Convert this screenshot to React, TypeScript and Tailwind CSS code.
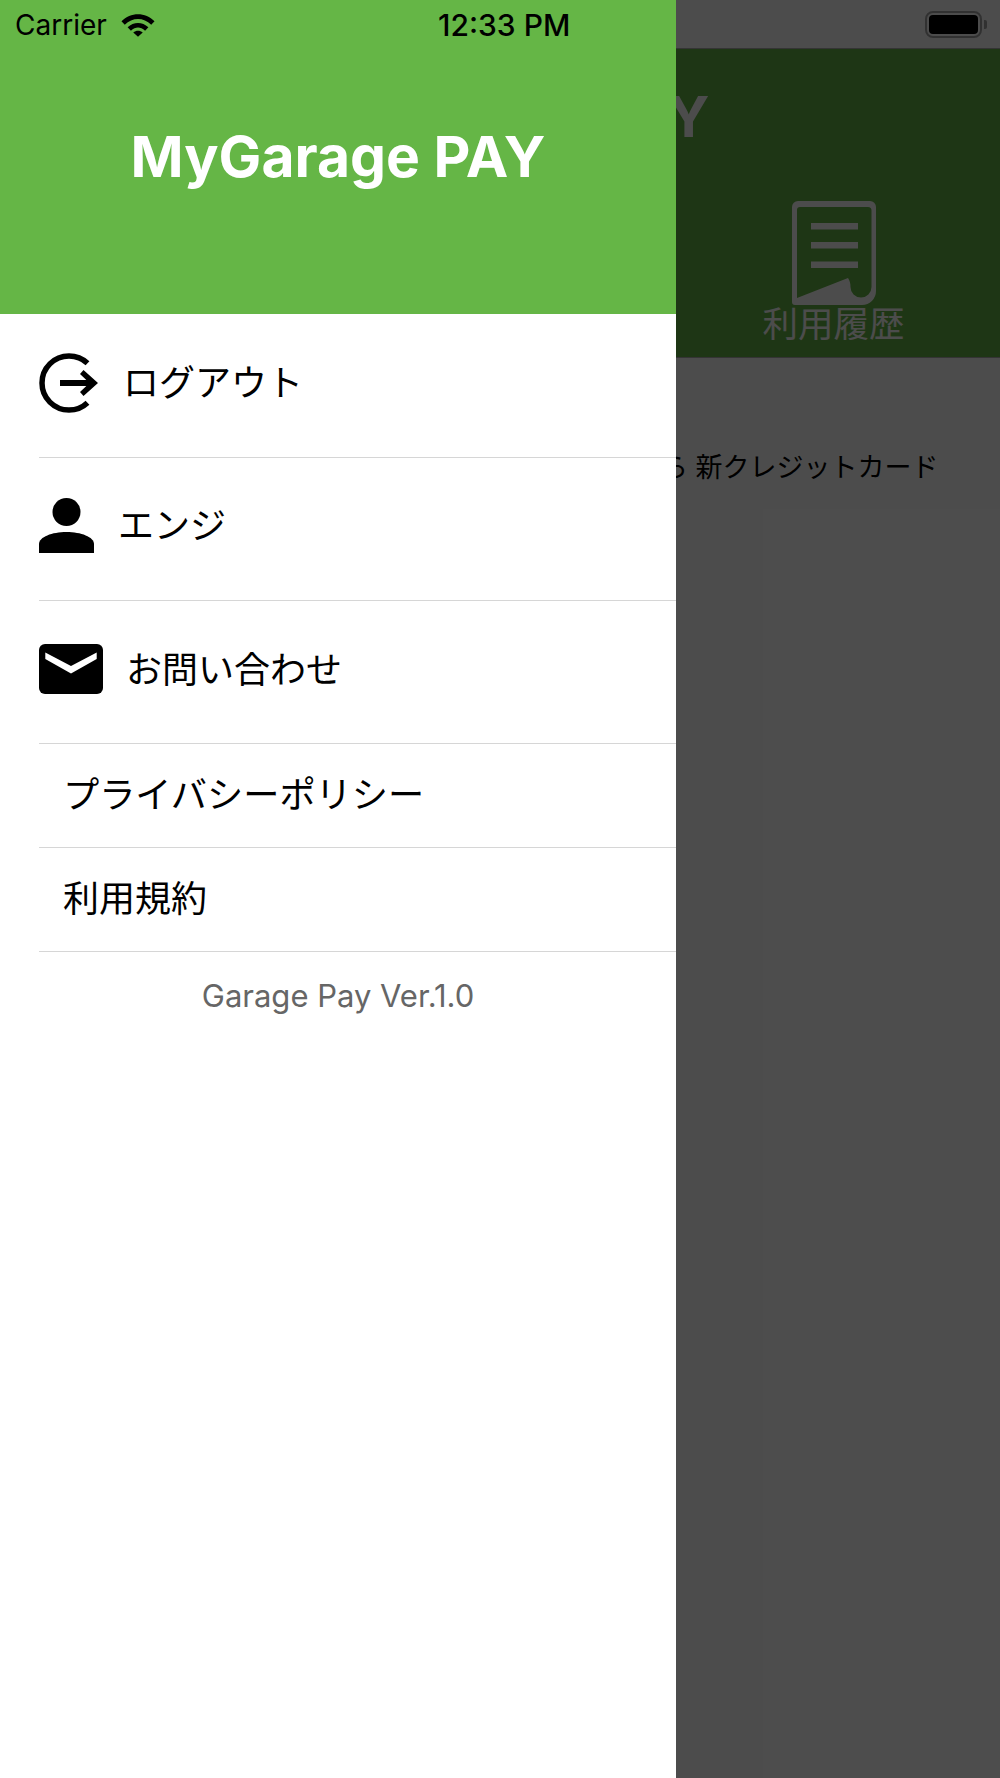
const jp = "font-['Inter','Noto_Sans_CJK_JP',sans-serif]";

function WifiIcon() {
  return (
    <svg width="34" height="24" viewBox="0 0 36 25">
      <path d="M0.5 8.5C10 -1.5 26 -1.5 35.500 8.5L32 12.200C24 4 12 4 4 12.200Z" fill="#000" />
      <path d="M7 15C13.500 9 22.500 9 29 15L25.500 18.500C20.500 14 15.500 14 10.500 18.500Z" fill="#000" />
      <path d="M13 20.500C16 18 20 18 23 20.500L18 25Z" fill="#000" />
    </svg>
  );
}

function BatteryIcon() {
  return (
    <div className="flex items-center gap-[2px]">
      <div className="w-[57px] h-[27px] rounded-[8px] border-[2px] border-[#a6a6a6] p-[2px]">
        <div className="w-full h-full rounded-[4px] bg-black" />
      </div>
      <div className="w-[3px] h-[9px] rounded-r-[2px] bg-[#a6a6a6]" />
    </div>
  );
}

function HistoryIcon() {
  return (
    <svg width="84" height="104" viewBox="0 0 84 104">
      <path
        fillRule="evenodd"
        d="M6 0H78a6 6 0 0 1 6 6V90a14 14 0 0 1-14 14H3a3 3 0 0 1-3-3V6a6 6 0 0 1 6-6ZM8 6H76a3.500 3.500 0 0 1 3.500 3.500V86a10.500 10.500 0 0 1-21 0C58.500 83 58 80 56 77L5 97V9a3 3 0 0 1 3-3Z"
        fill="#fff"
      />
      <rect x="19" y="22" width="47" height="6.500" fill="#fff" />
      <rect x="19" y="41" width="47" height="6.500" fill="#fff" />
      <rect x="19" y="60.500" width="47" height="6.500" fill="#fff" />
    </svg>
  );
}

function LogoutIcon() {
  return (
    <svg width="60" height="60" viewBox="0 0 60 60">
      <path
        d="M48.500 10.300C43.500 5.500 37 3 30 3C15 3 3 15 3 30C3 45 15 57 30 57C37 57 43.500 54.500 48.500 49.700"
        fill="none"
        stroke="#000"
        strokeWidth="5.500"
      />
      <rect x="21" y="27" width="32" height="6" fill="#000" />
      <path d="M44.500 17L59 30L44.500 43L41 39L50.500 30L41 21Z" fill="#000" />
    </svg>
  );
}

function UserIcon() {
  return (
    <svg width="55" height="55" viewBox="0 0 55 55">
      <circle cx="27.500" cy="14" r="14" fill="#000" />
      <path d="M0 55V46C0 39 13 34 27.500 34C42 34 55 39 55 46V55Z" fill="#000" />
    </svg>
  );
}

function MailIcon() {
  return (
    <svg width="64" height="50" viewBox="0 0 64 50">
      <rect width="64" height="50" rx="6" fill="#000" />
      <path d="M6.300 8.400L32 22L57.700 8.400V15L32 29.400L6.300 15Z" fill="#fff" />
    </svg>
  );
}

function MenuRow({ children, tall }: { children: React.ReactNode; tall?: boolean }) {
  return (
    <div className={`ml-[39px] flex items-center border-b border-[#d6d6d6] ${tall ? "h-[143px] pb-[7px]" : "h-[104px] pb-[1px]"}`}>
      {children}
    </div>
  );
}

export default function App() {
  return (
    <div className={`relative w-[1000px] h-[1778px] overflow-hidden bg-white ${jp}`}>
      {/* page behind the drawer */}
      <div className="flex h-[48px] items-center justify-end pr-[13px]">
        <BatteryIcon />
      </div>
      <div className="relative h-[310px] bg-[#65b646] border-y border-[#b0b0b0]">
        <p className="pt-[32px] pl-[4px] text-center text-[57px] leading-[72px] font-bold text-white">MyGarage PAY</p>
        <div className="absolute right-[96px] top-[152px] flex w-[141px] flex-col items-center">
          <HistoryIcon />
          <span className="-mt-[1px] text-[35.500px] leading-[42px] text-white whitespace-nowrap">利用履歴</span>
        </div>
      </div>
      <p className="pt-[90px] pl-[661px] text-[27px] leading-[40px] text-black whitespace-nowrap">
        ら 新クレジットカード
      </p>
      <div className="absolute inset-0 bg-black/70" />

      {/* drawer */}
      <div className="absolute left-0 top-0 h-full w-[676px] bg-white">
        <div className="h-[314px] bg-[#65b646]">
          <div className="flex h-[50px] items-center pl-[15px]">
            <span className="w-[106px] text-[28px] text-black">Carrier</span>
            <WifiIcon />
            <span className="ml-[283px] text-[30px] font-medium text-black">12:33 PM</span>
          </div>
          <p className="pt-[71px] text-center text-[57px] leading-[72px] font-bold text-white">MyGarage PAY</p>
        </div>
        <div className="pt-[1px]">
          <MenuRow tall>
            <LogoutIcon />
            <span className="ml-[24px] text-[36px] text-black">ログアウト</span>
          </MenuRow>
          <MenuRow tall>
            <UserIcon />
            <span className="ml-[24px] text-[36px] text-black">エンジ</span>
          </MenuRow>
          <MenuRow tall>
            <MailIcon />
            <span className="ml-[23px] mt-[2px] text-[36px] text-black">お問い合わせ</span>
          </MenuRow>
          <MenuRow>
            <span className="ml-[24px] text-[36.200px] text-black">プライバシーポリシー</span>
          </MenuRow>
          <MenuRow>
            <span className="ml-[24px] text-[36px] text-black">利用規約</span>
          </MenuRow>
        </div>
        <p className="pt-[25px] text-center text-[31px] leading-[38px] text-[#666]">Garage Pay Ver.1.0</p>
      </div>
    </div>
  );
}
